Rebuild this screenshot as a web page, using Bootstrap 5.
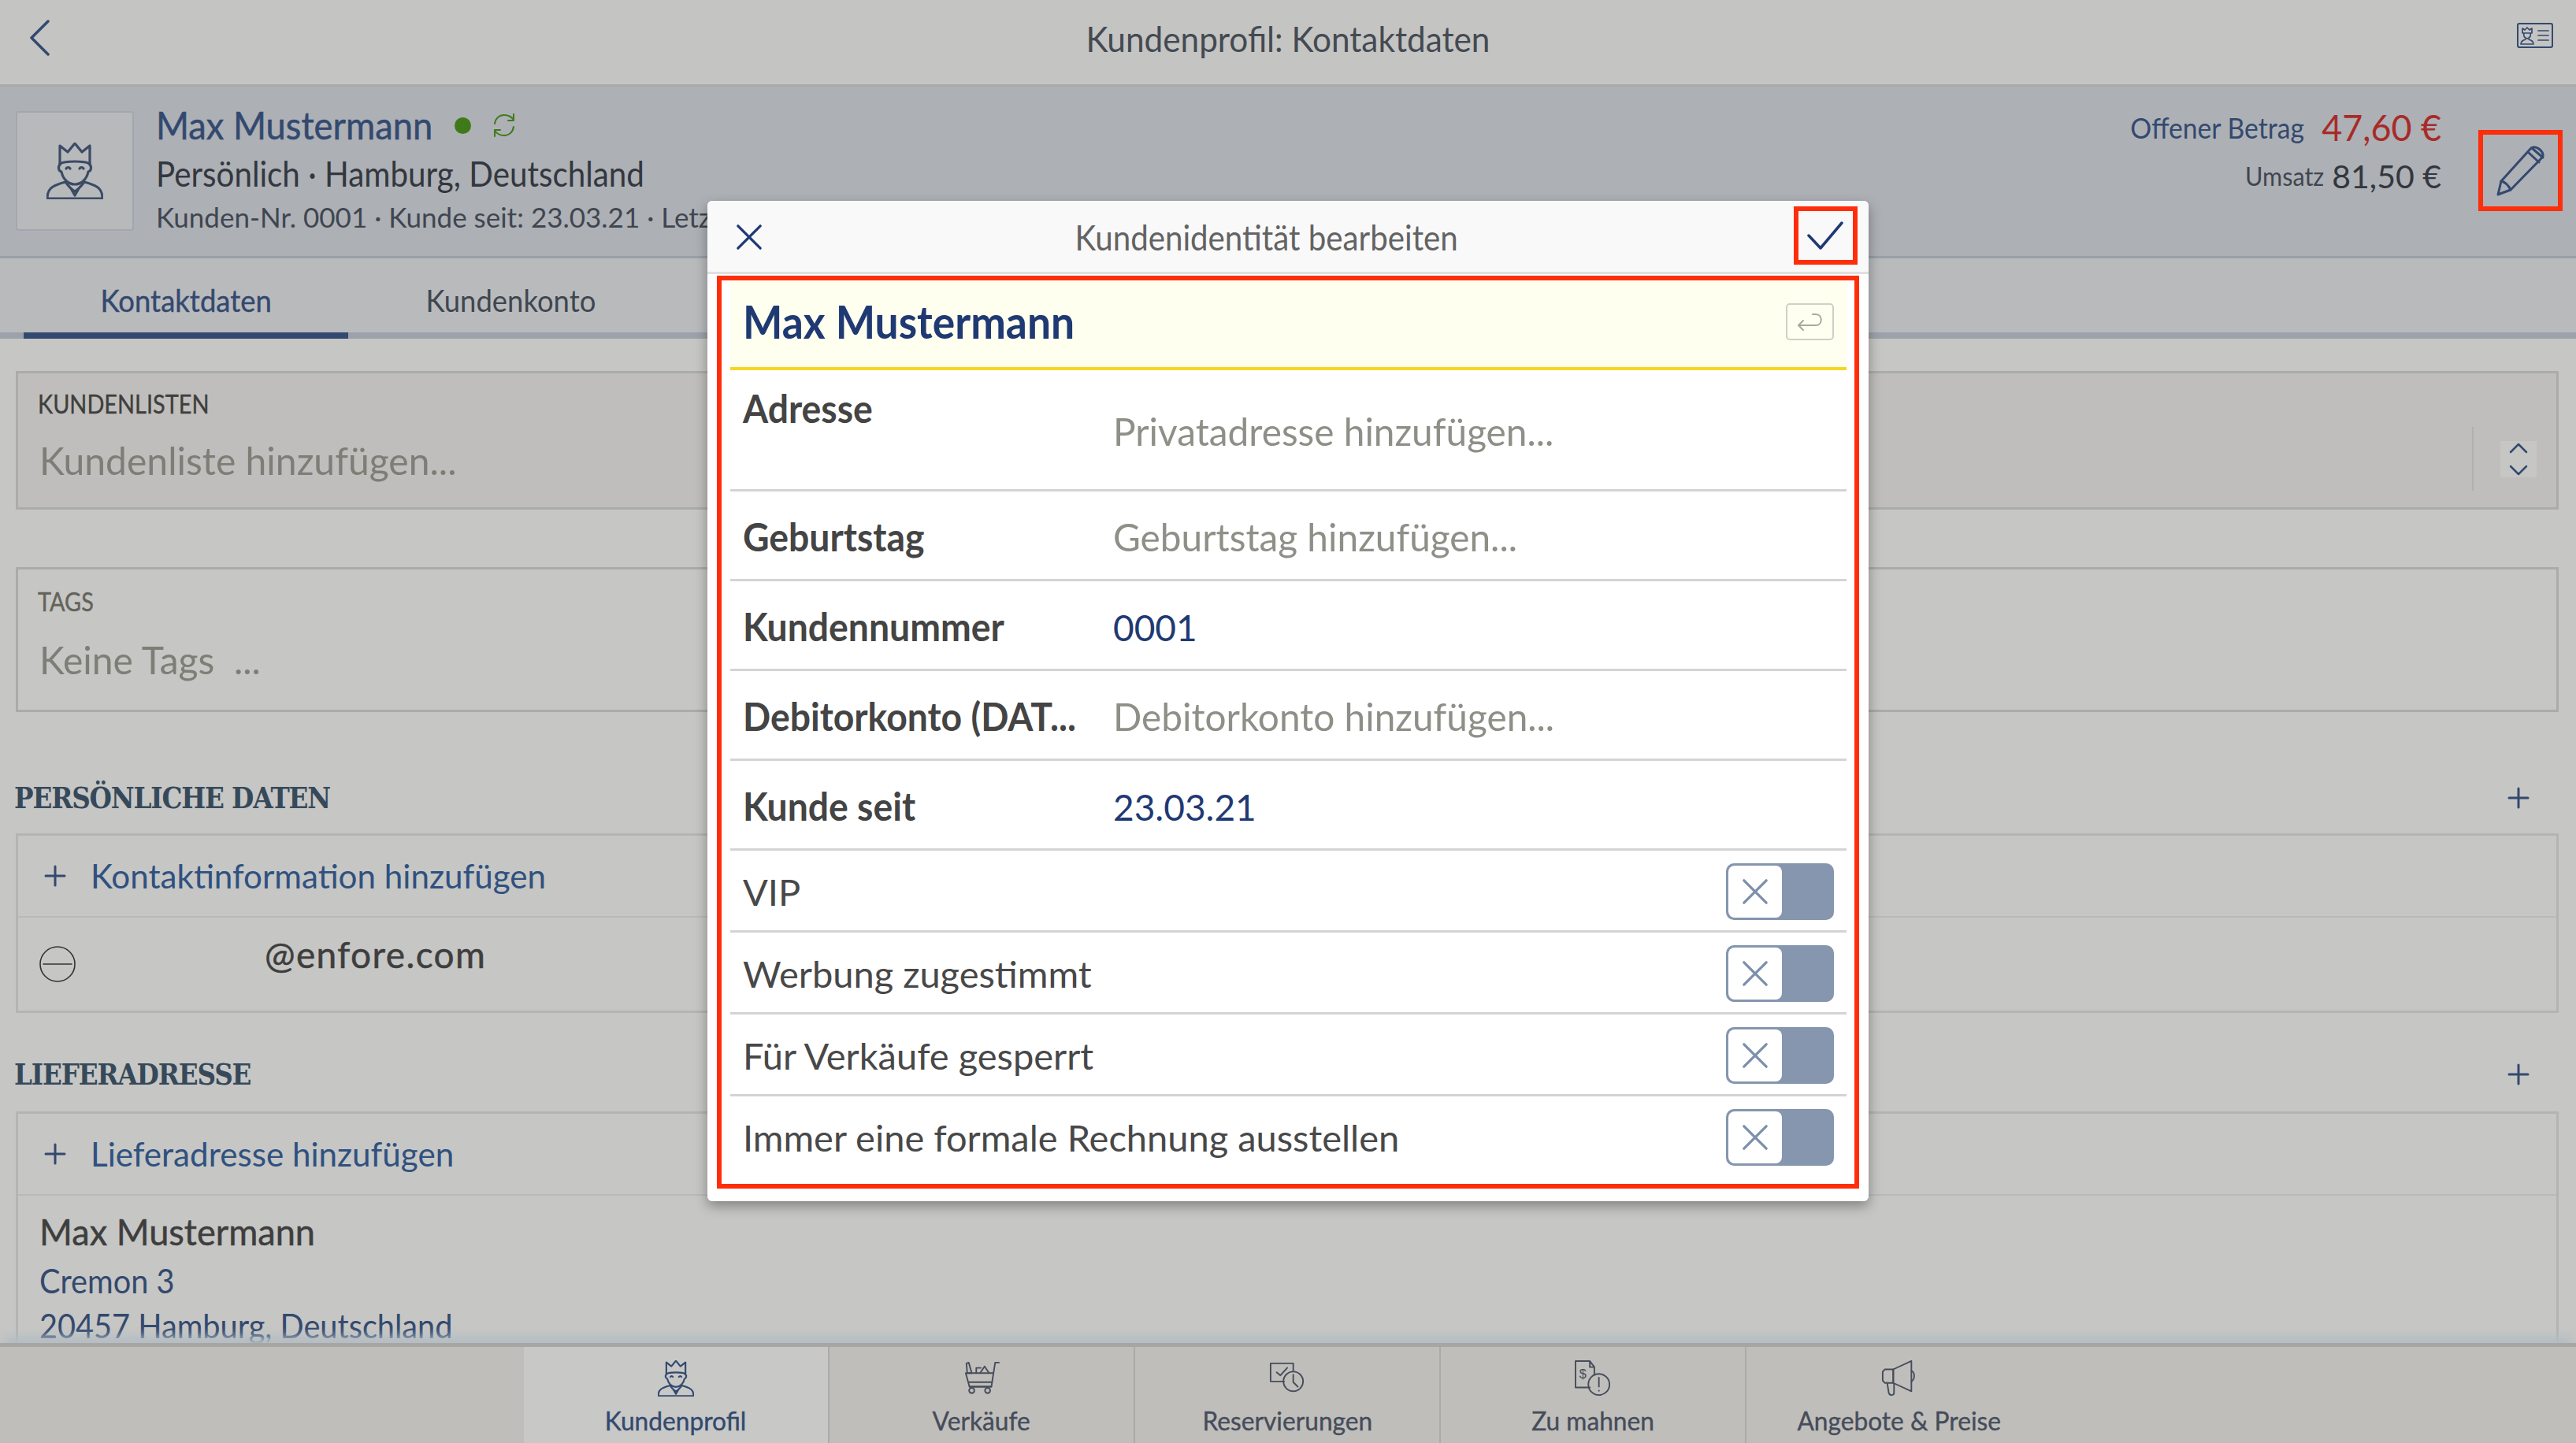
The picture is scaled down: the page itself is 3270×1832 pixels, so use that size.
<!DOCTYPE html>
<html lang="de">
<head>
  <meta charset="UTF-8" />
  <title>Kundenprofil: Kontaktdaten</title>
  <link href="https://cdn.jsdelivr.net/npm/bootstrap@5.3.0/dist/css/bootstrap.min.css" rel="stylesheet"/>
  <style>
    body { width: 3270px; height: 1832px; overflow: hidden; background: #c6c6c4; font-family: Lato, "Liberation Sans", sans-serif; color: #3c434e; position: relative; }
    svg { fill: none; stroke: currentColor; stroke-linecap: round; stroke-linejoin: round; display: block; }
    /* no condensed family installed: narrow the text instead */
    .nar { display: inline-block; white-space: nowrap; transform-origin: left center; }
    .nar-c { transform-origin: center; }
    .nar-r { transform-origin: right center; }
    .screen { width: 3270px; height: 1832px; }
    .topbar { height: 110px; flex: none; background: #c4c4c2; border-bottom: 3px solid #aaaaa8; color: #33496f; padding: 25px 29px 0 37px; }
    .topbar-side { width: 46px; }
    .topbar-title { font-size: 45px; line-height: 50px; color: #444a52; transform: scaleX(.94); margin-right: 8px; margin-top: -1px; }
    .cust-head { height: 218px; flex: none; background: #adb0b5; border-bottom: 3px solid #9a9fa8; padding: 31px 17px 0 20px; }
    .avatar-box { width: 150px; height: 152px; background: #b8b9bb; border: 2px solid #a2a7af; border-radius: 4px; color: #3b4b65; }
    .cust-line1 { margin-top: -4px; height: 44px; }
    .cust-name { width: 359px; font-size: 48px; line-height: 44px; color: #33496f; -webkit-text-stroke: .5px #33496f; transform: scaleX(.943); }
    .cust-dot { width: 21px; height: 21px; background: #3f7a1a; border-radius: 50%; margin: 0 26px 0 20px; flex: none; }
    .cust-sync { color: #3f7a1a; }
    .cust-sub { font-size: 44px; line-height: 62px; margin-top: 8px; color: #33373e; transform: scaleX(.917); }
    .cust-meta { font-size: 35px; line-height: 48px; color: #3f4650; display: block; }
    .amount-row { height: 61px; }
    .amounts { margin-right: 47px; margin-top: -10px; }
    .amount-lbl { font-size: 36px; color: #33496f; margin-right: 15px; transform: scaleX(.935); }
    .amount-red { font-size: 47px; color: #a82a28; transform: scaleX(.955); }
    .amount-lbl2 { font-size: 33px; color: #3f4650; margin-right: 10px; transform: scaleX(.925); margin-top: 2px; }
    .amount-dark { font-size: 41px; color: #33373e; margin-top: 2px; }
    .pen-box { width: 107px; height: 103px; border: 6px solid #ff2e0a; color: #33496f; margin-top: 24px; }
    .tabbar { height: 102px; flex: none; background: #b9babc; border-bottom: 8px solid #9da2aa; padding-left: 30px; }
    .tab-item { width: 412px; height: 102px; font-size: 39px; padding-top: 28px; line-height: 50px; text-align: center; color: #3f4650; }
    .tab-item .nar { transform: scaleX(.935); }
    .tab-item.is-on { color: #33496f; border-bottom: 8px solid #33496f; -webkit-text-stroke: .4px #33496f; }
    .content { flex: 1 1 auto; overflow: hidden; padding: 41px 22px 0 20px; }
    .field-box { border: 3px solid #abaca9; height: 176px; padding: 18px 25px; }
    .field-dark { background: #bfbebc; }
    .field-lbl { font-size: 33px; line-height: 40px; color: #3f3f3c; transform: scaleX(.875); -webkit-text-stroke: .4px #3f3f3c; }
    .field-lbl2 { color: #63635a; margin-top: 2px; display: block; -webkit-text-stroke: .4px #63635a; }
    .field-hint { font-size: 49px; line-height: 60px; color: #7d7e76; margin-top: 22px; padding-left: 2px; transform: scaleX(.98); display: block; }
    .vert-sep { width: 2px; height: 81px; background: #b0b0ae; margin-right: 34px; margin-top: 50px; }
    .updown { width: 46px; height: 46px; margin-top: 68px; background: #c6c6c4; padding: 2px 0; color: #33496f; }
    .section-head { font-family: "DejaVu Serif Condensed", "DejaVu Serif", serif; font-weight: 700; font-size: 38px; line-height: 50px; color: #36495a; letter-spacing: -1.2px; transform: scaleX(.955); margin-left: -2px; }
    .head-plus { color: #33496f; margin-right: 37px; }
    .sec-wrap { border: 3px solid #b4b4b2; }
    .sec-row { height: 104px; font-size: 43px; color: #2f5180; padding-left: 33px; border-bottom: 2px solid #b9b9b7; }
    .sec-row .nar { transform: scaleX(.98); }
    .add-plus { margin-right: 31px; color: #33496f; }
    .mail-row { height: 118px; padding-left: 27px; }
    .mail-text { font-size: 46px; color: #3e3e3e; margin-left: 240px; margin-top: -26px; letter-spacing: 1.4px; -webkit-text-stroke: .5px #3e3e3e; }
    .addr-wrap { padding: 10px 27px; }
    .addr-name { font-size: 47px; color: #3e3e3e; line-height: 70px; -webkit-text-stroke: .5px #3e3e3e; transform: scaleX(.96); display: block; }
    .addr-line { font-size: 42px; color: #33496f; line-height: 57px; transform: scaleX(.945); display: block; }
    .botbar { height: 127px; flex: none; background: #c0bebb; border-top: 5px solid #a8a6a3; padding-left: 665px; box-shadow: 0 -12px 12px -4px #b3bdc4; position: relative; }
    .bot-item { width: 388px; height: 122px; border-right: 2px solid #aaaaa8; text-align: center; color: #454d5a; font-size: 33px; line-height: 40px; padding-top: 17px; -webkit-text-stroke: .4px #454d5a; }
    .bot-item .nar { transform: scaleX(.96); }
    .bot-item:last-child { border-right: 0; }
    .bot-item.is-on { background: #c8c8c6; color: #33496f; -webkit-text-stroke: .4px #33496f; }
    .bot-item svg { margin: 0 auto 10px; }
    .edit-modal { position: absolute; left: 898px; top: 255px; width: 1474px; height: 1270px; background: #fff; border: 0; border-radius: 6px; box-shadow: 0 6px 16px rgba(0,0,0,.35); }
    .modal-top { height: 93px; background: #f9f9f9; border-bottom: 3px solid #e0e0e0; padding: 5px 14px 0 36px; border-radius: 6px 6px 0 0; }
    .modal-title-txt { font-size: 44px; color: #636363; margin-right: 30px; margin-top: -4px; transform: scaleX(.915); }
    .check-box { width: 81px; height: 74px; border: 6px solid #ff2e0a; color: #1f3a73; align-self: flex-start; margin-top: 2px; }
    .modal-x { color: #1f3a73; margin-top: -4px; }
    .red-frame { margin: 2px 12px 0; height: 1159px; border: 6px solid #ff2e0a; padding: 0 10px 0 11px; }
    .name-row { height: 114px; background: #fffff0; border-bottom: 4px solid #f8d51f; padding: 0 16px; }
    .name-big { font-size: 58px; font-weight: 700; color: #1f3a73; margin-top: -8px; transform: scaleX(.92); }
    .return-btn { width: 61px; height: 47px; border: 2px solid #cfcfc4; border-radius: 5px; color: #a8a89c; margin-top: -6px; }
    .form-rowx { border-bottom: 3px solid #d4d4d4; padding: 0 16px; }
    .row-lbl { font-size: 49px; font-weight: 700; width: 470px; color: #444; flex: none; transform: scaleX(.945); }
    .row-hint { font-size: 49px; color: #8f8f88; transform: scaleX(.975); }
    .row-val { font-size: 46px; color: #1f3a73; }
    .h-addr { height: 154px; }
    .h-std { height: 114px; }
    .h-std > div { margin-top: 5px; }
    .h-tog { height: 104px; }
    .tog-lbl { font-size: 47px; color: #484848; margin-top: 3px; }
    .toggle-x { width: 137px; height: 72px; background: #8596ae; border-radius: 10px; padding: 3px; margin-top: 3px; }
    .border-0 .toggle-x, .border-0 .tog-lbl { margin-top: 0; }
    .toggle-knob { width: 68px; height: 66px; background: #fff; border-radius: 8px; color: #7d90ab; }
  </style>
</head>
<body>
  <svg width="0" height="0" class="position-absolute">
    <symbol id="king" viewBox="0 0 72 72">
      <path d="M17 27V4l10 8 9-11 9 11 10-8v23"/>
      <path d="M17 27c6-4 32-4 38 0"/>
      <path d="M18 27c-4 3-3 9 1 10 2 10 9 16 17 16s15-6 17-16c4-1 5-7 1-10"/>
      <path d="M25 33c1-2 4-2 5 0M42 33c1-2 4-2 5 0"/>
      <path d="M1 71c0-12 5-16 23-21 3 4 8 10 12 12 4-2 9-8 12-12 18 5 23 9 23 21z"/>
      <path d="M32 60l4 7 4-7"/>
    </symbol>
    <symbol id="cart" viewBox="0 0 48 44">
      <path d="M42 1h5M42 1l-5 32H8L3 15h36"/>
      <path d="M4 2l3-1 4 14H5zM17 15V8h6M22 15l6-9 6 9"/>
      <path d="M7 27h31M8 33h29"/>
      <circle cx="11" cy="38" r="3.5"/><circle cx="32" cy="38" r="3.5"/>
    </symbol>
    <symbol id="resv" viewBox="0 0 48 44">
      <path d="M20 26H2V2h30v10"/>
      <path d="M10 14l5 4 9-10"/>
      <circle cx="32" cy="26" r="13"/>
      <path d="M32 17v10l6 6"/>
    </symbol>
    <symbol id="mega" viewBox="0 0 48 48">
      <path d="M16 12L40 1v40L16 30z"/>
      <path d="M16 12H5L2 15v12l3 3h11z"/>
      <path d="M8 30l2 13c1 4 7 4 7 0V31"/>
      <path d="M40 14c5 2 5 11 0 14"/>
    </symbol>
    <symbol id="cross" viewBox="0 0 36 36"><path d="M3 3l30 30M33 3L3 33"/></symbol>
    <symbol id="tplus" viewBox="0 0 28 28"><path d="M14 2v24M2 14h24"/></symbol>
  </svg>

  <div class="screen d-flex flex-column">
    <div class="topbar d-flex justify-content-between">
      <div class="topbar-side"><svg width="26" height="46" viewBox="0 0 26 46" stroke-width="3.5"><path d="M24 2L3 23l21 21"/></svg></div>
      <div class="topbar-title nar nar-c">Kundenprofil: Kontaktdaten</div>
      <svg width="46" height="32" viewBox="0 0 46 32" stroke-width="2" class="mt-1"><rect x="1" y="1" width="44" height="30" rx="2"/><path d="M7 7l3 2 3-3 3 3 3-2v6H7zM9 13c-1 3 0 6 4 7 4-1 5-4 4-7M5 27c0-4 3-5 6-6M21 27c0-4-3-5-6-6M5 27h16M27 10h13M27 16h13M27 22h13" stroke-width="1.7"/></svg>
    </div>

    <div class="cust-head d-flex">
      <div class="avatar-box d-flex align-items-center justify-content-center flex-none">
        <svg width="72" height="72" stroke-width="3.2"><use href="#king"/></svg>
      </div>
      <div class="ms-4 ps-1 flex-grow-1">
        <div class="cust-line1 d-flex align-items-center">
          <span class="cust-name nar">Max Mustermann</span>
          <span class="cust-dot"></span>
          <svg width="32" height="32" viewBox="0 0 32 32" stroke-width="2" class="cust-sync"><path d="M4 14C5 7 10 3 16 3c5 0 9 2 12 6M28 2v8h-7M28 18c-1 7-6 11-12 11-5 0-9-2-12-6M4 30v-8h7"/></svg>
        </div>
        <div class="cust-sub nar">Persönlich · Hamburg, Deutschland</div>
        <div class="cust-meta nar">Kunden-Nr. 0001 · Kunde seit: 23.03.21 · Letzter Verkauf</div>
      </div>
      <div class="amounts flex-none">
        <div class="amount-row d-flex justify-content-end align-items-center"><span class="amount-lbl nar nar-r">Offener Betrag</span><span class="amount-red nar nar-r">47,60 €</span></div>
        <div class="amount-row d-flex justify-content-end align-items-center"><span class="amount-lbl2 nar nar-r">Umsatz</span><span class="amount-dark">81,50 €</span></div>
      </div>
      <div class="pen-box d-flex align-items-center justify-content-center flex-none">
        <svg width="62" height="64" viewBox="0 0 62 64" stroke-width="3"><path d="M2 62l4-17L44 3c3-2 6-2 10 1 5 4 6 8 4 11L18 56z"/><path d="M6 45c5 1 9 5 12 11M40 8l14 13M45 3l14 12"/></svg>
      </div>
    </div>

    <div class="tabbar d-flex">
      <div class="tab-item is-on"><span class="nar nar-c">Kontaktdaten</span></div>
      <div class="tab-item"><span class="nar nar-c">Kundenkonto</span></div>
    </div>

    <div class="content">
      <div class="field-box field-dark d-flex justify-content-between">
        <div>
          <div class="field-lbl nar">KUNDENLISTEN</div>
          <div class="field-hint nar">Kundenliste hinzufügen...</div>
        </div>
        <div class="d-flex">
          <div class="vert-sep"></div>
          <div class="updown d-flex flex-column justify-content-between">
            <svg width="24" height="14" viewBox="0 0 24 14" stroke-width="2.5" class="mx-auto"><path d="M2 12L12 2l10 10"/></svg>
            <svg width="24" height="14" viewBox="0 0 24 14" stroke-width="2.5" class="mx-auto"><path d="M2 2l10 10L22 2"/></svg>
          </div>
        </div>
      </div>

      <div class="field-box" style="height:184px;margin-top:73px">
        <div class="field-lbl field-lbl2 nar">TAGS</div>
        <div class="field-hint nar" style="margin-top:24px">Keine Tags&nbsp; ...</div>
      </div>

      <div class="d-flex justify-content-between align-items-center" style="margin-top:84px;height:50px">
        <div class="section-head nar">PERSÖNLICHE DATEN</div>
        <svg width="28" height="28" stroke-width="3" class="head-plus"><use href="#tplus"/></svg>
      </div>
      <div class="sec-wrap" style="margin-top:20px">
        <div class="sec-row d-flex align-items-center"><svg width="28" height="28" stroke-width="3" class="add-plus"><use href="#tplus"/></svg><span class="nar">Kontaktinformation hinzufügen</span></div>
        <div class="mail-row d-flex align-items-center">
          <svg width="46" height="46" viewBox="0 0 46 46" stroke-width="1.6" color="#333"><circle cx="23" cy="23" r="22"/><path d="M5 23h36"/></svg>
          <div class="mail-text">@enfore.com</div>
        </div>
      </div>

      <div class="d-flex justify-content-between align-items-center" style="margin-top:53px;height:50px">
        <div class="section-head nar">LIEFERADRESSE</div>
        <svg width="28" height="28" stroke-width="3" class="head-plus"><use href="#tplus"/></svg>
      </div>
      <div class="sec-wrap" style="margin-top:22px">
        <div class="sec-row d-flex align-items-center"><svg width="28" height="28" stroke-width="3" class="add-plus"><use href="#tplus"/></svg><span class="nar">Lieferadresse hinzufügen</span></div>
        <div class="addr-wrap">
          <div class="addr-name nar">Max Mustermann</div>
          <div class="addr-line nar">Cremon 3</div>
          <div class="addr-line nar">20457 Hamburg, Deutschland</div>
        </div>
      </div>
    </div>

    <div class="botbar d-flex">
      <div class="bot-item is-on"><svg width="46" height="46" stroke-width="3.4"><use href="#king"/></svg><span class="nar nar-c">Kundenprofil</span></div>
      <div class="bot-item"><svg width="46" height="46" stroke-width="2"><use href="#cart"/></svg><span class="nar nar-c">Verkäufe</span></div>
      <div class="bot-item"><svg width="46" height="46" stroke-width="2"><use href="#resv"/></svg><span class="nar nar-c">Reservierungen</span></div>
      <div class="bot-item"><svg width="46" height="46" viewBox="0 0 48 48" stroke-width="2"><path d="M20 36H1V1h19l6 8v9M20 1v8h6"/><text x="6" y="24" font-size="17" fill="currentColor" stroke="none" font-family="Liberation Sans">$</text><circle cx="32" cy="32" r="14"/><path d="M32 23v12M32 40v.5"/></svg><span class="nar nar-c">Zu mahnen</span></div>
      <div class="bot-item"><svg width="46" height="46" stroke-width="2"><use href="#mega"/></svg><span class="nar nar-c">Angebote &amp; Preise</span></div>
    </div>
  </div>

  <div class="card edit-modal">
    <div class="modal-top d-flex align-items-center justify-content-between">
      <svg width="34" height="34" stroke-width="3.5" class="modal-x"><use href="#cross"/></svg>
      <div class="modal-title-txt nar nar-c">Kundenidentität bearbeiten</div>
      <div class="check-box d-flex align-items-center justify-content-center">
        <svg width="46" height="36" viewBox="0 0 46 36" stroke-width="3.5"><path d="M2 18l15 16L44 2"/></svg>
      </div>
    </div>
    <div class="red-frame">
      <div class="name-row d-flex align-items-center justify-content-between">
        <span class="name-big nar">Max Mustermann</span>
        <div class="return-btn d-flex align-items-center justify-content-center">
          <svg width="34" height="26" viewBox="0 0 34 26" stroke-width="2"><path d="M8 12L2 18l6 6M2 18h22c9 0 9-14 0-14h-4"/></svg>
        </div>
      </div>
      <div class="form-rowx h-addr d-flex">
        <div class="row-lbl nar" style="padding-top:12px">Adresse</div>
        <div class="row-hint nar" style="padding-top:41px">Privatadresse hinzufügen...</div>
      </div>
      <div class="form-rowx h-std d-flex align-items-center"><div class="row-lbl nar">Geburtstag</div><div class="row-hint nar">Geburtstag hinzufügen...</div></div>
      <div class="form-rowx h-std d-flex align-items-center"><div class="row-lbl nar">Kundennummer</div><div class="row-val">0001</div></div>
      <div class="form-rowx h-std d-flex align-items-center"><div class="row-lbl nar">Debitorkonto (DAT...</div><div class="row-hint nar">Debitorkonto hinzufügen...</div></div>
      <div class="form-rowx h-std d-flex align-items-center"><div class="row-lbl nar">Kunde seit</div><div class="row-val">23.03.21</div></div>
      <div class="form-rowx h-tog d-flex align-items-center justify-content-between"><div class="tog-lbl">VIP</div><div class="toggle-x"><div class="toggle-knob d-flex align-items-center justify-content-center"><svg width="34" height="34" stroke-width="3.5"><use href="#cross"/></svg></div></div></div>
      <div class="form-rowx h-tog d-flex align-items-center justify-content-between"><div class="tog-lbl">Werbung zugestimmt</div><div class="toggle-x"><div class="toggle-knob d-flex align-items-center justify-content-center"><svg width="34" height="34" stroke-width="3.5"><use href="#cross"/></svg></div></div></div>
      <div class="form-rowx h-tog d-flex align-items-center justify-content-between"><div class="tog-lbl">Für Verkäufe gesperrt</div><div class="toggle-x"><div class="toggle-knob d-flex align-items-center justify-content-center"><svg width="34" height="34" stroke-width="3.5"><use href="#cross"/></svg></div></div></div>
      <div class="form-rowx h-tog d-flex align-items-center justify-content-between border-0"><div class="tog-lbl">Immer eine formale Rechnung ausstellen</div><div class="toggle-x"><div class="toggle-knob d-flex align-items-center justify-content-center"><svg width="34" height="34" stroke-width="3.5"><use href="#cross"/></svg></div></div></div>
    </div>
  </div>

  <script src="https://cdn.jsdelivr.net/npm/bootstrap@5.3.0/dist/js/bootstrap.bundle.min.js"></script>
</body>
</html>
